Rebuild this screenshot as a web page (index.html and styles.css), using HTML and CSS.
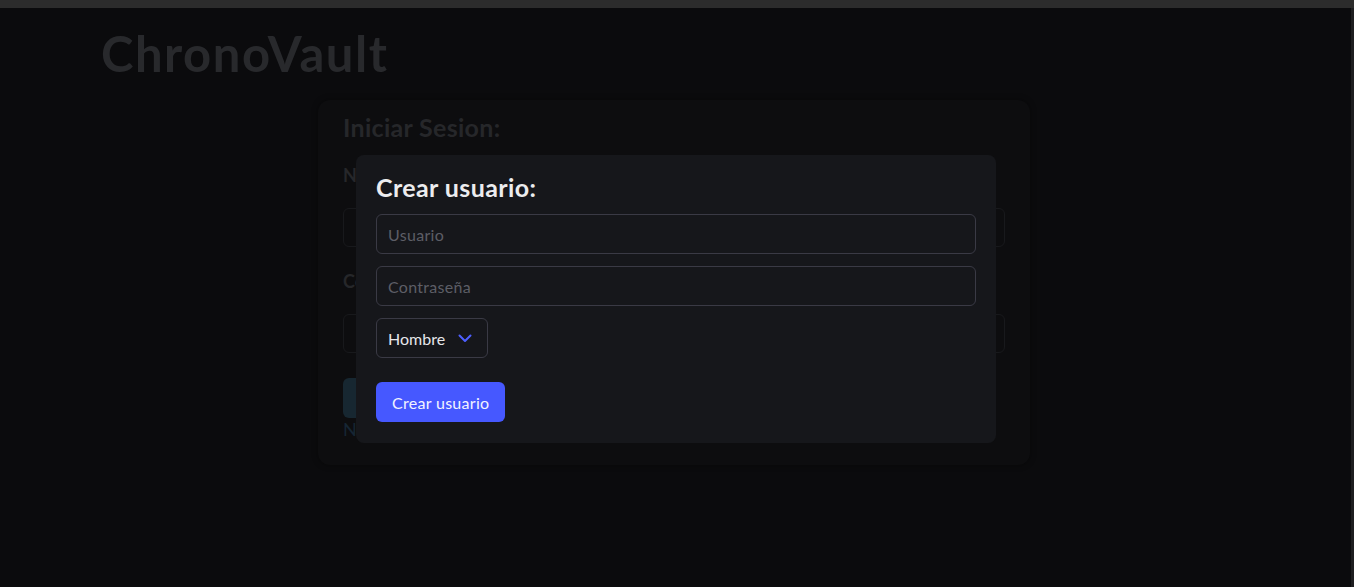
FILE: index.html
```html
<!DOCTYPE html>
<html lang="es">
<head>
<meta charset="utf-8">
<title>ChronoVault</title>
<link rel="stylesheet" href="styles.css">
</head>
<body>
<div class="topbar"></div>
<div class="scrollbar"></div>
<div class="container">
  <h1 class="brand">ChronoVault</h1>
  <div class="login-card">
    <h2 class="card-title">Iniciar Sesion:</h2>
    <label class="field-label">Nombre de usuario</label>
    <div class="bg-input"></div>
    <label class="field-label second">Contraseña</label>
    <div class="bg-input"></div>
    <div class="bg-button"></div>
    <p class="bg-link">No tienes cuenta? Crear usuario</p>
  </div>
</div>

<div class="modal">
  <h2 class="modal-title">Crear usuario:</h2>
  <div class="input"><span class="placeholder">Usuario</span></div>
  <div class="input"><span class="placeholder">Contraseña</span></div>
  <div class="select">
    <span class="select-value">Hombre</span>
    <svg class="chevron" width="14" height="9" viewBox="0 0 14 9"><polyline points="1.5,1.5 7,7 12.5,1.5" fill="none" stroke="#4d5fff" stroke-width="2" stroke-linecap="round" stroke-linejoin="round"/></svg>
  </div>
  <button class="primary">Crear usuario</button>
</div>
</body>
</html>
```

FILE: styles.css
```css
* { box-sizing: border-box; }
html, body { height: 100%; }
body {
  margin: 0;
  background: #0b0b0d;
  font-family: "Lato", "Noto Sans", sans-serif;
  overflow: hidden;
}
.topbar {
  height: 8px;
  background: #2c2c2c;
}
.scrollbar {
  position: fixed;
  top: 8px;
  right: 0;
  width: 3px;
  bottom: 0;
  background: #1e1e20;
}
.container {
  width: 1152px;
  margin: 0 auto;
}
.brand {
  margin: 0;
  padding-top: 17px;
  font-size: 49px;
  line-height: 56px;
  letter-spacing: 1.5px;
  font-weight: 700;
  color: #28292c;
}
.login-card {
  width: 712px;
  margin: 19px 0 0 217px;
  padding: 11px 25px 25px;
  background: #0d0d0f;
  border-radius: 12px;
  box-shadow: 0 0 6px rgba(0,0,0,0.4);
}
.card-title {
  margin: 0 0 21px;
  font-size: 25px;
  line-height: 32px;
  letter-spacing: 0.3px;
  color: #26272a;
}
.field-label {
  display: block;
  font-size: 18px;
  font-weight: 700;
  color: #26272a;
  line-height: 22px;
}
.field-label.second { margin-top: 23px; }
.bg-input {
  margin-top: 22px;
  height: 39px;
  border: 1px solid #18191c;
  border-radius: 6px;
}
.bg-button {
  margin-top: 25px;
  width: 160px;
  height: 40px;
  border-radius: 6px;
  background: #172731;
}
.bg-link {
  margin: 0;
  font-size: 18px;
  line-height: 22px;
  color: #162634;
}
.modal {
  position: absolute;
  top: 155px;
  left: 356px;
  width: 640px;
  padding: 17px 20px 21px;
  background: #16171b;
  border-radius: 8px;
  display: flex;
  flex-direction: column;
  align-items: flex-start;
}
.modal-title {
  margin: 0 0 12px;
  font-size: 25px;
  line-height: 30px;
  letter-spacing: 0.4px;
  font-weight: 700;
  color: #ececee;
}
.input {
  width: 600px;
  height: 40px;
  border: 1px solid #3a3a45;
  border-radius: 6px;
  padding: 0 11px;
  display: flex;
  align-items: center;
  margin-bottom: 12px;
}
.placeholder {
  font-size: 16px;
  letter-spacing: 0.3px;
  color: #5d5e66;
}
.select {
  width: 112px;
  height: 40px;
  border: 1px solid #3a3a45;
  border-radius: 6px;
  padding: 0 15px 0 11px;
  display: flex;
  align-items: center;
  justify-content: space-between;
}
.select-value {
  font-size: 16px;
  color: #e6e6ea;
}
.primary {
  margin-top: 24px;
  height: 40px;
  padding: 0 16px;
  border: 0;
  border-radius: 6px;
  background: #4658ff;
  color: #f2f3ff;
  font-family: inherit;
  font-size: 16px;
  letter-spacing: 0.3px;
}
```
